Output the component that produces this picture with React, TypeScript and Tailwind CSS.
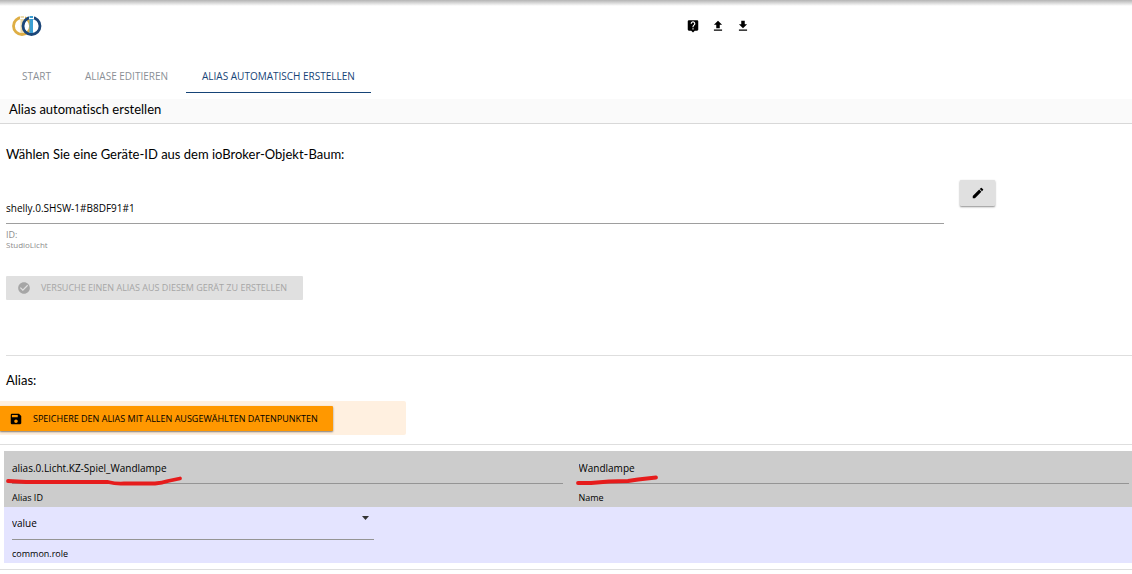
import React, { useState } from 'react';
import { MdCheckCircle, MdEdit, MdLiveHelp, MdSave } from 'react-icons/md';

const TABS = ['START', 'ALIASE EDITIEREN', 'ALIAS AUTOMATISCH ERSTELLEN'];

const Logo: React.FC = () => (
  <svg width="30" height="22" viewBox="0 0 30 22" fill="none" role="img" aria-label="Logo">
    <circle cx="10" cy="11" r="8.5" stroke="#deae45" strokeWidth="2.8" />
    <rect x="8" y="0" width="5" height="4" fill="#fff" />
    <rect x="8.500" y="1" width="3.500" height="2" fill="#eddcae" />
    <rect x="8.500" y="4" width="3.500" height="14" fill="#eddcae" />
    <circle cx="19.500" cy="11" r="8.5" stroke="#1b4679" strokeWidth="2.8" />
    <rect x="17" y="0" width="5" height="4" fill="#fff" />
    <rect x="17.500" y="4" width="3.500" height="14" fill="#3b9fd2" />
    <rect x="17.500" y="1" width="3.500" height="2" fill="#3b9fd2" />
  </svg>
);

const UploadIcon: React.FC = () => (
  <svg width="14" height="14" viewBox="0 0 24 24" fill="currentColor" aria-hidden="true">
    <path d="M9 16h6v-6h4l-7-7-7 7h4zM5 18h14v2H5z" />
  </svg>
);

const DownloadIcon: React.FC = () => (
  <svg width="14" height="14" viewBox="0 0 24 24" fill="currentColor" aria-hidden="true">
    <path d="M19 9h-4V3H9v6H5l7 7 7-7zM5 18v2h14v-2z" />
  </svg>
);

const App: React.FC = () => {
  const [activeTab, setActiveTab] = useState(2);
  const [deviceId, setDeviceId] = useState('shelly.0.SHSW-1#B8DF91#1');
  const [aliasId, setAliasId] = useState('alias.0.Licht.KZ-Spiel_Wandlampe');
  const [name, setName] = useState('Wandlampe');
  const [role, setRole] = useState('value');

  return (
    <div className="min-h-screen w-full overflow-x-hidden bg-white font-['Open_Sans','Noto_Sans',sans-serif] text-black [font-variant-ligatures:none]">

      {/* Header with logo and toolbar */}
      <header className="flex h-15 items-start bg-linear-to-b from-[#b4b4b4] to-white bg-[length:100%_6px] bg-no-repeat pt-[15px]">
        <div className="w-3/5 pl-3">
          <Logo />
        </div>
        <div className="flex gap-[11px] pt-1 pl-[7px]">
          <button aria-label="Hilfe"><MdLiveHelp size={14} /></button>
          <button aria-label="Hochladen"><UploadIcon /></button>
          <button aria-label="Herunterladen"><DownloadIcon /></button>
        </div>
      </header>

      <nav className="flex h-[33px] gap-0.5 pl-[6px] text-[10px]" role="tablist">
        {TABS.map((tab, idx) => (
          <button
            key={tab}
            role="tab"
            aria-selected={idx === activeTab}
            onClick={() => setActiveTab(idx)}
            className={`border-b px-4 pt-px ${
              idx === activeTab ? 'border-[#164477] text-[#164477]' : 'border-transparent text-[#8a8f96]'
            }`}
          >
            {tab}
          </button>
        ))}
      </nav>

      <h1 className="mt-1.5 border-b border-[#d8d8d8] bg-[#fafafa] pb-1 pl-[9px] font-['Lato',sans-serif] text-[13px] leading-5">
        Alias automatisch erstellen
      </h1>

      <main>
        {/* Device selection */}
        <section className="pt-5 pl-[6px]">
          <h2 className="font-['Lato',sans-serif] text-[13px] leading-5">Wählen Sie eine Geräte-ID aus dem ioBroker-Objekt-Baum:</h2>
          <div className="flex items-start gap-4 pt-4">
            <div className="w-5/6">
              <input
                id="device"
                value={deviceId}
                onChange={(e) => setDeviceId(e.target.value)}
                className="mt-3 block h-8 w-full border-b border-[#9e9e9e] text-[10px] outline-none"
              />
              <label htmlFor="device" className="block pt-1.5 text-[#8c8c8c]">
                <span className="block text-[9px] leading-[10px]">ID:</span>
                <span className="block text-[8px] leading-[10px]">StudioLicht</span>
              </label>
            </div>
            <button
              aria-label="Gerät bearbeiten"
              className="flex h-[26px] w-[35px] items-center justify-center rounded-[1px] bg-[#e0e0e0] shadow-[0_1px_2px_rgba(0,0,0,0.45)]"
            >
              <MdEdit size={14} />
            </button>
          </div>
          <button
            disabled
            className="mt-[26px] flex h-6 items-center gap-2.5 rounded-[1px] bg-[#e0e0e0] pr-4 pl-[11px] text-[9px] text-[#a6a6a6]"
          >
            <MdCheckCircle size={14} />
            VERSUCHE EINEN ALIAS AUS DIESEM GERÄT ZU ERSTELLEN
          </button>
          <hr className="mt-[55px] border-[#dedede]" />
        </section>

        {/* Save action */}
        <section>
          <h2 className="pt-3.5 pl-[6px] font-['Lato',sans-serif] text-[13px] leading-5">Alias:</h2>
          <div className="mt-[11px] w-[406px] rounded-r-xs bg-[#fff0e0] pt-[5px] pb-1">
            <button className="flex h-[25px] items-center gap-2.5 rounded-r-[1px] bg-[#ff9800] pr-[15px] pl-[9px] text-[9px] shadow-[0_1px_2px_rgba(0,0,0,0.5)]">
              <MdSave size={14} />
              SPEICHERE DEN ALIAS MIT ALLEN AUSGEWÄHLTEN DATENPUNKTEN
            </button>
          </div>
          <hr className="mt-[9px] border-[#dedede]" />
        </section>

        {/* Alias details */}
        <section className="mt-1.5 pl-1 text-[10px]">
          <div className="grid h-14 grid-cols-2 gap-4 bg-[#cccccc] pr-[3px] pl-2">
            <div className="relative">
              <input
                id="alias-id"
                value={aliasId}
                onChange={(e) => setAliasId(e.target.value)}
                className="block h-[33px] w-full border-b border-[#949494] pt-px outline-none"
              />
              <label htmlFor="alias-id" className="block pt-2 text-[9px] leading-3">Alias ID</label>
              <svg className="pointer-events-none absolute top-6 -left-2" width="180" height="12" fill="none" aria-hidden="true">
                <path d="M4 6 L22 7 L104 7 Q112 9 120 8.500 L151 8.500 Q158 8 164 6 L176 3.500" stroke="#e61c1c" strokeWidth="3.8" strokeLinecap="round" strokeLinejoin="round" />
              </svg>
            </div>
            <div className="relative">
              <input
                id="name"
                value={name}
                onChange={(e) => setName(e.target.value)}
                className="block h-[33px] w-full border-b border-[#949494] pt-px outline-none"
              />
              <label htmlFor="name" className="block pt-2 text-[9px] leading-3">Name</label>
              <svg className="pointer-events-none absolute top-6 -left-1" width="86" height="12" fill="none" aria-hidden="true">
                <path d="M3 8 L16 8 L34 6.500 L53 6 L63 4.500 L81 2.500" stroke="#e61c1c" strokeWidth="3.8" strokeLinecap="round" strokeLinejoin="round" />
              </svg>
            </div>
          </div>
          <div className="grid h-14 grid-cols-3 gap-4 bg-[#e4e4ff] pr-[3px] pl-2">
            <div className="relative">
              <select
                id="role"
                value={role}
                onChange={(e) => setRole(e.target.value)}
                className="block h-[33px] w-full appearance-none border-b border-[#949494] outline-none"
              >
                <option value="value">value</option>
                <option value="switch">switch</option>
              </select>
              <svg className="pointer-events-none absolute top-[9px] right-1" width="9" height="4" viewBox="0 0 9 4" aria-hidden="true">
                <path d="M1 0h7L4.500 4z" fill="#333" />
              </svg>
              <label htmlFor="role" className="block pt-2 text-[9px] leading-3">common.role</label>
            </div>
          </div>
        </section>
        <hr className="mt-1.5 border-[#dedede]" />
      </main>

    </div>
  );
};

export default App;
